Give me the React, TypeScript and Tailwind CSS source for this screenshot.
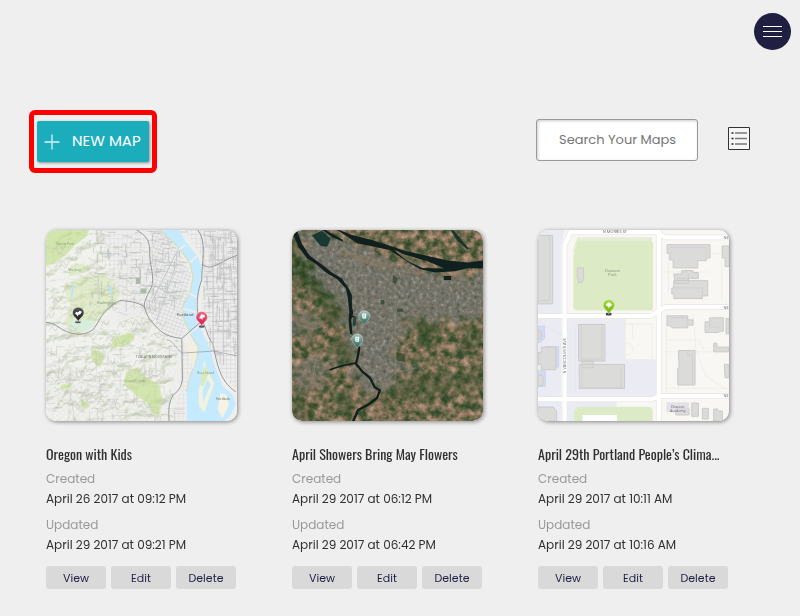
import React from "react";

type MapCard = {
  title: string;
  created: string;
  updated: string;
  Thumb: () => React.JSX.Element;
};

/* Small repeatable generator, so that the textures are the same on every load. */
function makeRandom(seed: number) {
  let s = seed;
  return () => {
    s = (s * 16807) % 2147483647;
    return s / 2147483647;
  };
}

function scatterPaths(seed: number, count: number, x: number, y: number, w: number, h: number) {
  const r = makeRandom(seed);
  return Array.from({ length: count }, () => {
    const px = x + r() * w;
    const py = y + r() * h;
    const dx = 14 + r() * 30;
    const dy = -24 + r() * 34;
    return `M${px.toFixed(0)} ${py.toFixed(0)}q${(dx / 3).toFixed(0)} ${(dy - 9).toFixed(0)} ${(dx / 2).toFixed(0)} ${(dy / 2).toFixed(0)}t${(dx / 2).toFixed(0)} ${(dy / 2).toFixed(0)}`;
  }).join("");
}

function scatterBlocks(seed: number, count: number, x: number, y: number, w: number, h: number) {
  const r = makeRandom(seed);
  return Array.from({ length: count }, () => {
    const px = x + r() * w;
    const py = y + r() * h;
    const len = 8 + r() * 34;
    return r() > 0.5
      ? `M${px.toFixed(0)} ${py.toFixed(0)}h${len.toFixed(0)}`
      : `M${px.toFixed(0)} ${py.toFixed(0)}v${len.toFixed(0)}`;
  }).join("");
}

const contourLight = scatterPaths(11, 90, 18, 60, 330, 500);
const contourDark = scatterPaths(29, 60, 18, 70, 310, 490);
const cityLight = scatterBlocks(7, 160, 150, 14, 270, 230);
const cityWest = scatterBlocks(19, 160, 20, 360, 390, 220);
const cityEast = scatterBlocks(43, 210, 490, 14, 100, 380);

function Pin({ x, y, id, top, bottom, children }: { x: number; y: number; id: string; top: string; bottom: string; children: React.ReactNode }) {
  return (
    <g transform={`translate(${x} ${y})`}>
      <defs>
        <linearGradient id={id} x1="0" y1="0" x2="0" y2="1">
          <stop offset="0" stopColor={top} />
          <stop offset="1" stopColor={bottom} />
        </linearGradient>
      </defs>
      <path d="M0 0C-3-12-17-15-17-27a17 17 0 0 1 34 0C17-15 3-12 0 0Z" fill={`url(#${id})`} stroke="#ffffff" strokeOpacity=".55" strokeWidth="1.5" />
      {children}
    </g>
  );
}

const frame = "block aspect-square w-full rounded-[10px] shadow-[1px_1px_4px_rgba(0,0,0,0.45)]";

function OregonMap() {
  return (
    <svg className={frame} viewBox="18 14 574 574" role="img" aria-label="Map of Portland" fontFamily='"Open Sans", sans-serif'>
      <defs>
        <pattern id="gridA" width="13" height="13" patternUnits="userSpaceOnUse">
          <path d="M0 0H13M0 0V13" stroke="#c9cacb" strokeWidth="2" />
        </pattern>
        <pattern id="gridB" width="11" height="11" patternUnits="userSpaceOnUse" patternTransform="rotate(20)">
          <path d="M0 0H11M0 0V11" stroke="#c3c4c6" strokeWidth="2.4" />
        </pattern>
        <pattern id="gridC" width="12" height="12" patternUnits="userSpaceOnUse" patternTransform="rotate(-38)">
          <path d="M0 0H12M0 0V12" stroke="#c9cacb" strokeWidth="2" />
        </pattern>
        <filter id="relief" x="0" y="0" width="1" height="1" colorInterpolationFilters="sRGB">
          <feTurbulence type="fractalNoise" baseFrequency="0.022 0.03" numOctaves="4" seed="4" />
          <feDiffuseLighting surfaceScale="24" diffuseConstant="1.15" lightingColor="#ffffff">
            <feDistantLight azimuth="235" elevation="60" />
          </feDiffuseLighting>
          <feComponentTransfer>
            <feFuncR type="table" tableValues=".68 .74 .8 .86 .92 .96" />
            <feFuncG type="table" tableValues=".7 .77 .83 .88 .94 .96" />
            <feFuncB type="table" tableValues=".56 .64 .73 .81 .89 .94" />
          </feComponentTransfer>
        </filter>
        <clipPath id="hills">
          <path d="M18 14H190L250 228 210 262 168 320 318 262 375 338 420 345 400 480V588H18Z" />
        </clipPath>
      </defs>
      <rect x="18" y="14" width="574" height="574" fill="#eeeeed" />
      <g clipPath="url(#hills)">
        <rect x="18" y="14" width="574" height="574" filter="url(#relief)" opacity=".55" />
      </g>
      <g fill="#c3df8c" opacity=".65">
        <path d="M18 14H148L138 34 105 60 78 88 40 116 18 120Z" />
        <path d="M92 120l40-6 12 20-30 14-28 6zM70 180l54-26 70-12 24 28 22 32-10 34-42 36-50 44-40 20-22-40 14-60z" opacity=".5" />
        <path d="M154 374l30 4 10 18-14 32-24-22zM215 340l52-18 18 18-28 22-40 4zM258 440l38-14 22 30 40 24 10 46-12 44-18-4-20-36-30-20-34-30zM62 480l36-4-6 12-28 6zM120 528l20-2 8 20-18 6z" />
      </g>
      <path d="M90 288l68-6 12 18-30 20-40-4z" fill="#d6eee0" opacity=".8" />
      <path d="M330 14h42l50 72 34 60-24 110 8 50-12 32-54-10-54-74 22-100z" fill="url(#gridB)" />
      <path d="M158 14H324L330 150 308 238 240 224 200 130Z" fill="url(#gridA)" opacity=".7" />
      <path d="M240 232l68 14 58 80 56 22-26 160-60-140-100-80z" fill="url(#gridC)" opacity=".35" />
      <path d="M18 420l180 30 90 70 100 0v68H18Z" fill="url(#gridC)" opacity=".4" />
      <path d="M436 14H592V500L545 440 516 350 485 240 490 100Z" fill="url(#gridA)" />
      <path d="M424 350l46 20-26 110-8 108h-46l30-90z" fill="url(#gridA)" opacity=".7" />
      <path d={contourLight} fill="none" stroke="#c8ccbc" strokeWidth="2" />
      <path d={contourDark} fill="none" stroke="#bbbcb8" strokeWidth="1.3" />
      <path d={cityLight + cityEast} fill="none" stroke="#b3b5b8" strokeWidth="1.6" />
      <path d={cityWest} fill="none" stroke="#c2c3c3" strokeWidth="1.4" />
      <path d="M204 180l10 6 4 24-8-4zM98 176l6 8-8 36-4-4z" fill="#bbe4f2" />
      <path d="M360 14H418L440 52 476 96 488 136 480 190 468 232 474 292 488 318 512 378 524 420 550 484 578 508 588 535 576 566 556 588H440L442 548 440 500 452 450 472 400 476 366 454 330 432 280 430 240 450 206 460 154 450 112 414 64Z" fill="#c6eafd" />
      <path d="M360 14L414 64 450 112 460 154 450 206 430 240 432 280 454 330 476 366 472 400 452 450 440 500" fill="none" stroke="#d5dfc1" strokeWidth="4" />
      <path d="M492 402l10 34 22 38-16 48-14 40-16-18-2-46 12-36z" fill="#f1f2df" />
      <path d="M502 462l12 16-12 26-12 30-2-36z" fill="#c6eafd" />
      <path d="M496 422l10 26-16 36-6-4 2-34z" fill="#d9e9ba" />
      <path d="M542 504l18 4 8 32-20 40-14-28z" fill="#f6f3e4" />
      <path d="M450 334l20 38-8 60-24-70z" fill="#f2eee0" />
      <path d="M410 76l28-16M450 112l30-28M450 206l24 10M430 250l40 12M430 340l64-52" stroke="#ededeb" strokeWidth="6" />
      <g fill="none" stroke="#959798" strokeWidth="3">
        <path d="M18 292c20 0 32 10 50 22 30 14 60 20 88 2 24-22 24-60 84-90 30 2 50 4 74 18 6 20 8 30 22 46 28 30 36 44 90 50l60-52M290 14c28 16 38 30 40 60-4 36 18 86 4 114-18 36-22 42-20 62M426 342l2 120c-4 24-10 34-26 46-16 22-16 46-14 80" />
        <path d="M474 14c28 30 12 100 12 150-12 34-18 68-10 112 26 20 20 50 44 82 12 58 20 110 68 142M486 118c36 20 46-6 106-28" />
        <path d="M380 344c20 2 24 20 46 40l94-6 72 14" strokeWidth="2" />
      </g>
      <path d="M336 230l80-160M350 286l60-170M330 170l80 50M500 320h92M500 206h92M520 70v300M552 50v370" stroke="#c7c8c8" strokeWidth="3" />
      <g fill="#68696a" fontSize="10" textAnchor="middle">
        <text x="436" y="271" fontSize="12" fontWeight="600">Portland</text>
        <text x="342" y="398" fontSize="10">TUALATIN MOUNTAINS</text>
        <text x="76" y="60" fill="#82966e">Forest Park</text>
        <text x="104" y="138" fill="#82966e">Macleay</text>
        <text x="198" y="236" fill="#82966e">Washington</text>
        <text x="284" y="470" fill="#82966e">Council Crest</text>
        <text x="498" y="448" fill="#82966e">Ross Island</text>
        <text x="550" y="524">Hardtack</text>
      </g>
      <path d="M288 158h14v18h-14zM302 190h18v14h-18z" fill="#aebaa9" />
      <ellipse cx="114" cy="291" rx="9" ry="3" fill="#555" />
      <ellipse cx="486" cy="304" rx="9" ry="4" fill="#555" />
      <Pin x={115} y={290} id="pinDark" top="#565656" bottom="#1c1c1c">
        <path d="M-10-24l4-6 5 2 5-5 7 3-5 7-6 2-2 5-3-5z" fill="#fff" />
      </Pin>
      <Pin x={486} y={303} id="pinRed" top="#f0657f" bottom="#dc1842">
        <path d="M-9-24l4-4 3-8 10 2 2 7-7 1-1 7-5-4z" fill="#fff" />
      </Pin>
    </svg>
  );
}

function SatelliteMap() {
  return (
    <svg className={frame} viewBox="18 14 574 574" role="img" aria-label="Satellite view of Portland">
      <defs>
        <clipPath id="satFrame"><rect x="18" y="14" width="574" height="574" rx="30" /></clipPath>
        <filter id="farmland" x="0" y="0" width="1" height="1" colorInterpolationFilters="sRGB">
          <feTurbulence type="fractalNoise" baseFrequency="0.045" numOctaves="6" seed="21" />
          <feColorMatrix values="1 0 0 0 0  1 0 0 0 0  1 0 0 0 0  0 0 0 0 1" />
          <feComponentTransfer>
            <feFuncR type="table" tableValues=".18 .18 .2 .24 .34 .45 .56 .65 .7 .75 .75" />
            <feFuncG type="table" tableValues=".27 .27 .29 .32 .38 .42 .47 .53 .6 .66 .66" />
            <feFuncB type="table" tableValues=".15 .15 .17 .19 .25 .31 .38 .44 .5 .56 .56" />
          </feComponentTransfer>
        </filter>
        <filter id="urban" x="0" y="0" width="1" height="1" colorInterpolationFilters="sRGB">
          <feTurbulence type="fractalNoise" baseFrequency="0.09" numOctaves="5" seed="3" />
          <feColorMatrix values="1 0 0 0 0  1 0 0 0 0  1 0 0 0 0  0 0 0 0 1" />
          <feComponentTransfer>
            <feFuncR type="table" tableValues=".3 .32 .37 .41 .44 .46 .49 .53 .59 .63 .63" />
            <feFuncG type="table" tableValues=".31 .33 .37 .41 .44 .455 .48 .52 .58 .62 .62" />
            <feFuncB type="table" tableValues=".25 .27 .32 .36 .4 .415 .44 .48 .55 .6 .6" />
          </feComponentTransfer>
        </filter>
        <filter id="forest" x="0" y="0" width="1" height="1" colorInterpolationFilters="sRGB">
          <feTurbulence type="fractalNoise" baseFrequency="0.05" numOctaves="4" seed="12" />
          <feColorMatrix values="1 0 0 0 0  1 0 0 0 0  1 0 0 0 0  0 0 0 0 1" />
          <feComponentTransfer>
            <feFuncR type="table" tableValues=".14 .14 .16 .18 .21 .27 .34 .42 .48" />
            <feFuncG type="table" tableValues=".23 .23 .25 .27 .31 .35 .4 .44 .48" />
            <feFuncB type="table" tableValues=".12 .12 .13 .14 .17 .21 .27 .33 .38" />
          </feComponentTransfer>
        </filter>
        <filter id="feather" x="-.2" y="-.2" width="1.4" height="1.4">
          <feGaussianBlur stdDeviation="12" result="soft" />
          <feTurbulence type="fractalNoise" baseFrequency="0.03" numOctaves="4" seed="5" result="noise" />
          <feDisplacementMap in="soft" in2="noise" scale="70" xChannelSelector="R" yChannelSelector="G" />
        </filter>
        <mask id="urbanMask" maskUnits="userSpaceOnUse" x="18" y="14" width="574" height="574">
          <g filter="url(#feather)" fill="#fff">
            <path d="M30 10L230 60 350 120 470 150 610 150V270L470 288 380 270 340 340 330 430 310 500 265 490 225 420 190 360 165 240 90 160Z" />
            <path d="M190 400l60 20 30 70-20 20-60-50z" />
            <path d="M60 400h60l50 10-40 40-70 60-42-20v-60zM0 250h80l40 40-60 50-60-20z" fillOpacity=".6" />
            <path d="M340 425h60l-10 20h-60z" fillOpacity=".7" />
          </g>
        </mask>
        <mask id="forestMask" maskUnits="userSpaceOnUse" x="18" y="14" width="574" height="574">
          <g filter="url(#feather)" fill="#fff">
            <path d="M10 40L60 110 120 160 170 220 130 250 60 190 10 140Z" />
            <path d="M130 340l70-6 6 60-50 20-40-30zM110 220l80 10 8 80-70-10z" fillOpacity=".6" />
            <path d="M320 460l110-10 170-14v50l-110 20-60 20h-140z" fillOpacity=".45" />
            <path d="M390 280l50-10 10 70-30 40-30-40zM530 320l40-10 10 50-40 30z" fillOpacity=".8" />
            <path d="M150 490l40 0 0 60-50 20zM18 520l40 20-10 40-30 0z" fillOpacity=".6" />
          </g>
        </mask>
      </defs>
      <g clipPath="url(#satFrame)">
        <rect x="18" y="14" width="574" height="574" filter="url(#farmland)" />
        <rect x="18" y="14" width="574" height="574" filter="url(#forest)" mask="url(#forestMask)" />
        <rect x="18" y="14" width="574" height="574" filter="url(#urban)" mask="url(#urbanMask)" />
        <path d="M328 130V470M208 70V240M220 400l60 80" fill="none" stroke="#8f8b79" strokeWidth="2" opacity=".8" />
        <path d="M282 486l50-46 60-12M60 400l40 6M90 400l-10 70M220 360h100M228 112l-20 60" fill="none" stroke="#8b8e8d" strokeWidth="3" opacity=".5" />
        <path d="M284 224h12v14h-12zM322 150l14 8-6 20-10-6zM334 250h18v10h-18zM332 382l24 4 2 24-26-4z" fill="#34482a" opacity=".8" />
        <path d="M160 70l80 24 60 16 26 22-40-4-60-16-70-28z" fill="#8e7a60" opacity=".4" />
        <g fill="#10201f">
          <path d="M18 18h16L48 56l24 36 34 24 32 26 30 18 20 30 10 20v30l4 24-6 20 4 44-8-2-4-40 2-26-4-40-6-30-26-28-34-20-30-26-28-18-24-32z" />
          <path d="M78 30l30-14 26 24-10 24-20-2z" fill="#173833" />
          <path d="M110 14h8l50 28 6 8-34-14z" />
          <path d="M160 14l36 14 62 16 38 12 60 20 70 16 60 14 60 6 46-6v24l-44-2-40 10-60 4-44-10-42-24-50-34-58-12-40-8-60-40zM322 72l40 34 48 22 66 2-50-22-70-20z" fillRule="evenodd" />
          <path d="M494 14l12 4 22 26 22 26-6 2-28-24z" fill="#1c332c" />
          <path d="M474 152h22v12h-22z" />
        </g>
        <g fill="none" stroke="#101e1b" strokeLinecap="round" strokeLinejoin="round">
          <path d="M220 368l-4 26-6 22 18 22 24 20 14 28 16 10-8 22-26 20-32 18-14 32" strokeWidth="7" />
          <path d="M208 414l-40 8-36 12" strokeWidth="5" />
          <path d="M194 270l12 6v22" strokeWidth="5" />
        </g>
        <path d="M204 276l8-2-4 30-8-4z" fill="#24443f" />
        <Pin x={235} y={300} id="pinTealA" top="#a8c3bc" bottom="#22604e">
          <path d="M-6-35h12v7l-1 8h-10l-1-8z" fill="#fff" /><path d="M-3-31h6M-3-25h6" stroke="#6d9388" strokeWidth="2" />
        </Pin>
        <Pin x={214} y={370} id="pinTealB" top="#a8c3bc" bottom="#22604e">
          <path d="M-6-35h12v7l-1 8h-10l-1-8z" fill="#fff" /><path d="M-3-31h6M-3-25h6" stroke="#6d9388" strokeWidth="2" />
        </Pin>
      </g>
    </svg>
  );
}

function StreetMap() {
  return (
    <svg className={frame} viewBox="18 14 574 574" role="img" aria-label="Street map around Dawson Park" fontFamily='"Open Sans", sans-serif'>
      <defs><clipPath id="streetFrame"><rect x="18" y="14" width="574" height="574" rx="30" /></clipPath></defs>
      <g clipPath="url(#streetFrame)">
        <rect x="18" y="14" width="574" height="574" fill="#f8f7f3" />
        <path d="M18 14H98L88 60V588H18ZM106 280H280V404H374V514H106ZM106 530H254V588H106Z" fill="#ebecf3" />
        <path d="M122 80L136 36H360V60Z" fill="#e6edd6" />
        <path d="M138 48H354Q364 48 364 58V246Q364 256 354 256H138Q124 256 124 244V92Z" fill="#dceac5" />
        <path d="M126 558Q130 546 142 545H350Q362 546 363 558V588H126Z" fill="#dceac5" />
        <path d="M152 570H255V588H152Z" fill="#fff" />
        <g fill="none" stroke="#eceae5" strokeWidth="2">
          <path d="M122 296H360V400M280 280V404H374M224 384l24 34M302 296V340M394 84H580M394 140H530M410 204V60M570 60V230M400 344H500L520 380M400 380H592M484 268l8 104 30 80 60 40M404 264V500M440 440v60M400 490H590" />
          <circle cx="286" cy="372" r="17" />
          <path d="M40 500l50 50M20 290l70 40M130 300v200" stroke="#e2e2eb" />
        </g>
        <g fill="none" stroke="#e6e5e3" strokeWidth="17" strokeLinejoin="round">
          <path d="M98 600V60L116 20H374L400 36H600M381 14V600M18 273H355L400 246H600M18 522H360L390 513H600" />
        </g>
        <g fill="none" stroke="#ffffff" strokeWidth="13" strokeLinejoin="round">
          <path d="M98 600V60L116 20H374L400 36H600M381 14V600M18 273H355L400 246H600M18 522H360L390 513H600" />
        </g>
        <g fill="#d4dbf4" stroke="#c5cdea" strokeWidth="2">
          <path d="M18 303H38V340L26 352H18ZM42 364H80V426H60ZM18 436H40V484H18Z" />
        </g>
        <g fill="#dbdbda" stroke="#cbcbca" strokeWidth="3" strokeLinejoin="round">
          <path d="M18 30H62V236H18Z" />
          <path d="M136 128H155V160L150 172H140V158H136Z" />
          <path d="M18 318H28V340H18ZM28 366H72V434H28V418H20V382H28ZM18 450h12l6 16-6 16H18ZM18 546H64L74 558V588H18Z" />
          <path d="M140 298H219V408H140ZM150 408H184V428H150ZM142 418H278V490H142Z" />
          <path d="M406 58H535V98H524V106H498V128H424V104H414V84H406ZM426 146H450V136H484V142H500V160H470V174H430ZM426 166H528V212H512V220H426V206H420V188H426Z" />
          <path d="M572 62H592V124H580V98H572ZM406 272H468V284H484V300H468V308H420V302H406ZM534 278H575V318H562V322H520V290H534ZM583 280H592V326H583Z" />
          <path d="M440 376H490V480H438V430H442ZM546 354H556V366H592V380H546ZM578 418H592V458H580Z" />
          <path d="M432 550H472V570H432ZM480 534H500V574H480ZM512 550H530V582H512ZM546 552H558V558H572V588H546Z" />
          <path
            d="M52 30V226H18M148 298V402H210V298M150 430V488H268V424M414 66H524V92M432 160H470V146M426 188H512V208M418 278H466V304M534 290V306H562M468 376V390H482V478"
            fill="none"
            strokeWidth="2"
          />
        </g>
        <path d="M404 532H472V562H404Z" fill="#dedae6" opacity=".75" />
        <g fill="#858a79" fontSize="12" textAnchor="middle">
          <text x="242" y="141">Dawson</text>
          <text x="242" y="153">Park</text>
        </g>
        <g fill="#696969" fontSize="12" textAnchor="middle">
          <text x="249" y="24">N MORRIS ST</text>
          <text transform="translate(102 392) rotate(-90)">N VANCOUVER AVE</text>
          <text x="583" y="41">NE</text><text x="583" y="250">NE</text><text x="583" y="517">NE</text>
          <text x="438" y="549" fontSize="11">Dawson</text><text x="438" y="560" fontSize="11">Academy</text>
        </g>
        <rect x="222" y="263" width="17" height="8" rx="3" fill="#444" />
        <Pin x={231} y={267} id="pinGreen" top="#a6dc3c" bottom="#68b40c">
          <path d="M-8-25a6 6 0 0 1 3-8 6 6 0 0 1 10 0 6 6 0 0 1 2 9l-5 1-2 7-2-7z" fill="#fff" />
        </Pin>
      </g>
    </svg>
  );
}

const maps: MapCard[] = [
  { title: "Oregon with Kids", created: "April 26 2017 at 09:12 PM", updated: "April 29 2017 at 09:21 PM", Thumb: OregonMap },
  { title: "April Showers Bring May Flowers", created: "April 29 2017 at 06:12 PM", updated: "April 29 2017 at 06:42 PM", Thumb: SatelliteMap },
  { title: "April 29th Portland People’s Clima...", created: "April 29 2017 at 10:11 AM", updated: "April 29 2017 at 10:16 AM", Thumb: StreetMap },
];

function Card({ title, created, updated, Thumb }: MapCard) {
  return (
    <article className="w-full max-w-[191px]">
      <Thumb />
      <h2 className="mt-[21px] whitespace-nowrap font-['Oswald','Liberation_Sans_Narrow','Roboto_Condensed','Liberation_Sans',sans-serif] text-sm leading-6 text-[#303030]">
        {title}
      </h2>
      <dl className="mt-[3px] whitespace-nowrap text-xs leading-5 text-[#303030]">
        <dt className="text-[#999999]">Created</dt>
        <dd>{created}</dd>
        <dt className="mt-1.5 text-[#999999]">Updated</dt>
        <dd>{updated}</dd>
      </dl>
      <div className="mt-[11px] flex gap-[5px] text-[#201f42]">
        {["View", "Edit", "Delete"].map((label) => (
          <button key={label} type="button" className="h-[23px] w-15 rounded-[3px] bg-[#d9d9d9] text-[11px] leading-[22px]">
            {label}
          </button>
        ))}
      </div>
    </article>
  );
}

export default function App() {
  return (
    <div className="min-h-screen bg-[#efefef] pb-6 font-['Poppins','Inter','Open_Sans',sans-serif]">
      <header className="flex justify-end pr-[9px] pt-[13px]">
        <button type="button" aria-label="Menu" className="flex size-[37px] items-center justify-center rounded-full bg-[#201f42]">
          <svg width="19" height="11" viewBox="0 0 19 11" aria-hidden="true">
            <path d="M0 .5h19M0 5.5h19M0 10.5h19" stroke="#fff" />
          </svg>
        </button>
      </header>
      <main>
        <div className="mt-15 flex items-start justify-between pl-[29px] pr-[50px]">
          <div className="rounded-md border-[5px] border-[#ff0000] px-[3px] pb-[6px] pt-[6px]">
            <button type="button" className="flex h-[41px] w-28 items-center gap-3 rounded-[2px] bg-[#1cadbc] pl-[7px] text-[15px] text-white shadow-[1px_1px_3px_rgba(0,0,0,0.4)]">
              <svg width="16" height="16" viewBox="0 0 16 16" aria-hidden="true" className="shrink-0">
                <path d="M.5 8h15M8 .5v15" stroke="#d9f1f3" strokeWidth="1.3" />
              </svg>
              <span className="whitespace-nowrap">NEW MAP</span>
            </button>
          </div>
          <div className="mt-[9px] flex items-start gap-[30px]">
            <input
              type="text"
              aria-label="Search Your Maps"
              placeholder="Search Your Maps"
              className="h-[42px] w-[162px] rounded-[3px] border border-[#999999] bg-white pl-[22px] pr-3 text-[13px] shadow-[inset_1px_1px_3px_rgba(0,0,0,0.2)] placeholder:text-[#757575]"
            />
            <button type="button" aria-label="List view" className="mt-2">
              <svg width="22" height="23" viewBox="0 0 22 23" aria-hidden="true">
                <path d="M.5.5h21v22H.5z" fill="#f5f5f5" stroke="#333" />
                <path d="M7 6h12M7 11.5h12M7 17h12" stroke="#777" strokeWidth="1.3" />
                <path d="M3.5 6h2M3.5 11.5h2M3.5 17h2" stroke="#222" strokeWidth="1.5" />
              </svg>
            </button>
          </div>
        </div>
        <section aria-label="Your maps" className="mt-[57px] grid grid-cols-3 pl-[46px] pr-4">
          {maps.map((map) => (
            <Card key={map.title} {...map} />
          ))}
        </section>
      </main>
    </div>
  );
}
